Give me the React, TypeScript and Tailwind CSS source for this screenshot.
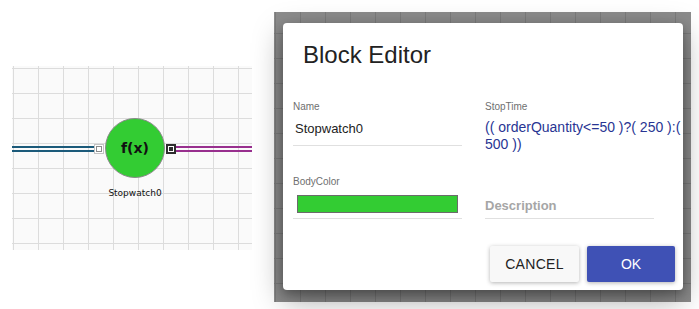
import React from "react";

const gridLight =
  "bg-[#fafafa] bg-[linear-gradient(to_right,#dcdcdc_1px,transparent_1px),linear-gradient(to_bottom,#dcdcdc_1px,transparent_1px)] bg-[size:25px_25px] bg-[position:1px_2px]";

const gridDark =
  "bg-[#8c8c8c] bg-[linear-gradient(to_right,#7c7c7c_1px,transparent_1px),linear-gradient(to_bottom,#7c7c7c_1px,transparent_1px)] bg-[size:25px_25px] bg-[position:1px_-4px]";

function Canvas() {
  return (
    <div className={`relative ml-[12px] mt-[66px] h-[184px] w-[240px] shrink-0 ${gridLight}`}>
      {/* left wire */}
      <div className="absolute left-0 top-[80px] h-[2px] w-[82px] bg-[#1b5a7a]" />
      <div className="absolute left-0 top-[84px] h-[2px] w-[82px] bg-[#1b5a7a]" />
      {/* right wire */}
      <div className="absolute left-[163px] top-[80px] h-[2px] w-[77px] bg-[#982f8e]" />
      <div className="absolute left-[163px] top-[84px] h-[2px] w-[77px] bg-[#982f8e]" />
      {/* node body */}
      <div className="absolute left-[93px] top-[52px] flex h-[60px] w-[60px] items-center justify-center rounded-full border border-[#8a8a8a] bg-[#33cc33]">
        <span className="font-['DejaVu_Sans',sans-serif] text-[14px] font-bold leading-none text-[#111]">
          f(x)
        </span>
      </div>
      {/* left port */}
      <div className="absolute left-[82px] top-[78px] flex h-[10px] w-[10px] items-center justify-center bg-[#c4c4c4]">
        <div className="flex h-[8px] w-[8px] items-center justify-center bg-white">
          <div className="h-[6px] w-[6px] border border-[#8c8c8c] bg-white" />
        </div>
      </div>
      {/* right port */}
      <div className="absolute left-[154px] top-[78px] flex h-[10px] w-[10px] items-center justify-center bg-[#2e2e2e]">
        <div className="flex h-[6px] w-[6px] items-center justify-center bg-white">
          <div className="h-[4px] w-[4px] bg-[#2e2e2e]" />
        </div>
      </div>
      {/* label */}
      <div className="absolute left-[83px] top-[121px] w-[80px] text-center font-['DejaVu_Sans',sans-serif] text-[9px] leading-[12px] text-[#111]">
        Stopwatch0
      </div>
    </div>
  );
}

function Field({
  label,
  children,
}: {
  label: string;
  children: React.ReactNode;
}) {
  return (
    <div className="flex w-[169px] flex-col">
      <div className="text-[10px] leading-[12px] text-[#6f6f6f]">{label}</div>
      {children}
    </div>
  );
}

function Dialog() {
  return (
    <div className="flex h-[267px] w-[400px] flex-col rounded-[4px] bg-white shadow-[0_10px_30px_rgba(0,0,0,0.35),0_4px_10px_rgba(0,0,0,0.25)] font-['Liberation_Sans',Arial,sans-serif]">
      <div className="pl-[20px] pt-[16px] text-[24px] leading-[32px] text-[#222]">
        Block Editor
      </div>
      <div className="mt-[30px] flex gap-[23px] pl-[10px]">
        <div className="flex flex-col">
          <Field label="Name">
            <div className="mt-[6px] border-b border-[#e0e0e0] pb-[6px] pl-[2px] text-[13px] leading-[20px] text-[#222]">
              Stopwatch0
            </div>
          </Field>
          <div className="mt-[30px]">
            <Field label="BodyColor">
              <div className="mt-[7px] border-b border-[#e0e0e0] pb-[5px] pl-[4px] pr-[4px]">
                <div className="h-[18px] w-full border border-[#6b6b6b] bg-[#33cc33]" />
              </div>
            </Field>
          </div>
        </div>
        <div className="flex flex-col">
          <Field label="StopTime">
            <div className="mt-[6px] flex flex-col text-[14px] leading-[17px] text-[#283593]">
              <span className="whitespace-nowrap">(( orderQuantity&lt;=50 )?( 250 ):(</span>
              <span className="whitespace-nowrap">500 ))</span>
            </div>
          </Field>
          <div className="mt-[43px] border-b border-[#e0e0e0] pb-[2px] text-[13px] font-bold leading-[20px] text-[#a6a6a6]">
            Description
          </div>
        </div>
      </div>
      <div className="mt-auto flex justify-end gap-[8px] pb-[8px] pr-[8px]">
        <button className="h-[36px] w-[89px] rounded-[2px] bg-[#f8f8f8] text-[14px] tracking-[0.3px] text-[#222] shadow-[0_1px_4px_rgba(0,0,0,0.3)]">
          CANCEL
        </button>
        <button className="h-[36px] w-[88px] rounded-[2px] bg-[#3f51b5] text-[14px] text-white shadow-[0_1px_4px_rgba(0,0,0,0.3)]">
          OK
        </button>
      </div>
    </div>
  );
}

export default function App() {
  return (
    <div className="flex h-[309px] w-[699px] items-start bg-white">
      <Canvas />
      <div className={`ml-[22px] mt-[12px] h-[290px] w-[417px] shrink-0 pl-[9px] pt-[11px] ${gridDark}`}>
        <Dialog />
      </div>
    </div>
  );
}
